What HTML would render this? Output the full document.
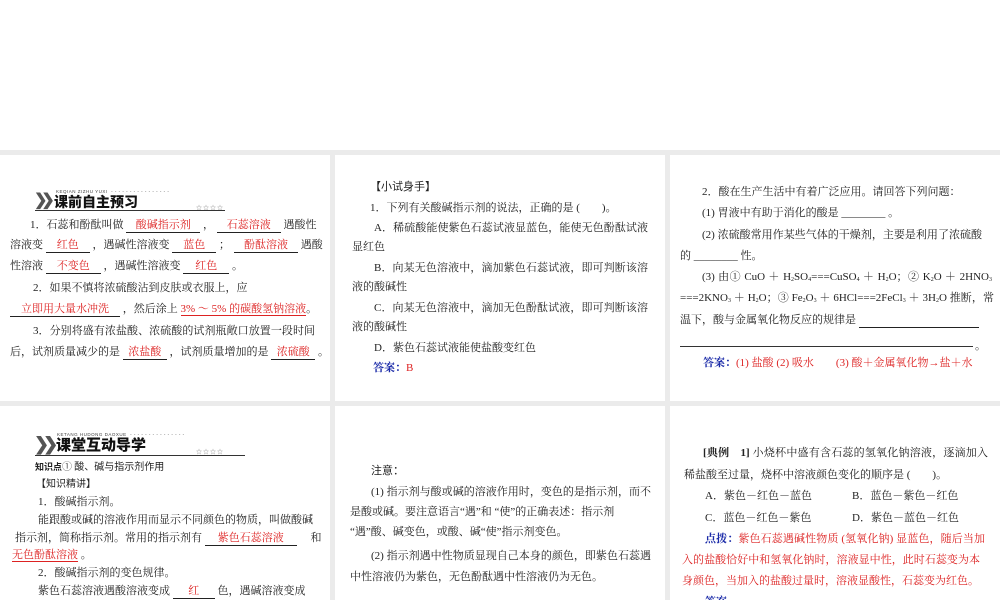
<!DOCTYPE html>
<html><head><meta charset="utf-8">
<style>
*{margin:0;padding:0;box-sizing:border-box}
html,body{width:1000px;height:600px;overflow:hidden}
body{position:relative;background:#ebebeb;font-family:"Liberation Serif","Noto Serif CJK SC",serif;color:#222}
.p{position:absolute;background:#fff}
.l{position:absolute;white-space:nowrap;font-size:11px;line-height:14px}
.j{text-align:justify;text-align-last:justify}
.b{display:inline-block;border-bottom:1px solid #222;text-align:center;color:#d22;line-height:13px;text-align-last:center}
.r{color:#d22}
.u{color:#d22;border-bottom:1px solid #d22}
.bl{color:#1a2aa8;font-weight:bold}
.hd{position:absolute;font-family:"Noto Sans CJK SC",sans-serif;font-weight:900;color:#111;white-space:nowrap}
.py{position:absolute;font-family:"Liberation Sans",sans-serif;font-size:4.5px;color:#444;letter-spacing:.5px;white-space:nowrap}
.st{position:absolute;font-size:6px;color:#888;letter-spacing:1px}
.hl{position:absolute;height:1px;background:#333}
.chev{position:absolute;font-family:"Liberation Sans",sans-serif;font-weight:bold;color:#555;letter-spacing:-6px}
sub{font-size:6px;vertical-align:-1px}
.s{font-family:"Noto Sans CJK SC",sans-serif}
</style></head><body>
<div class="p" style="left:0;top:0;width:1000px;height:150px"></div>
<div class="p" style="left:0;top:155px;width:330px;height:246px"></div>
<div class="p" style="left:335px;top:155px;width:330px;height:246px"></div>
<div class="p" style="left:670px;top:155px;width:330px;height:246px"></div>
<div class="p" style="left:0;top:406px;width:330px;height:200px"></div>
<div class="p" style="left:335px;top:406px;width:330px;height:200px"></div>
<div class="p" style="left:670px;top:406px;width:330px;height:200px"></div>

<!-- panel 1 -->
<div class="py" style="left:56px;top:189px">KEQIAN ZIZHU YUXI &nbsp;- - - - - - - - - - - - - - - -</div>
<div class="chev" style="left:34px;top:192px;font-size:16px;line-height:17px">❯❯</div>
<div class="hd" style="left:54px;top:194px;font-size:14px;line-height:16px">课前自主预习</div>
<div class="st" style="left:196px;top:203px">☆☆☆☆</div>
<div class="hl" style="left:35px;top:210px;width:190px"></div>
<div class="l" style="left:30px;top:218px">1．石蕊和酚酞叫做 <span class="b" style="width:74px">酸碱指示剂</span> ， <span class="b" style="width:64px">石蕊溶液</span> 遇酸性</div>
<div class="l" style="left:10px;top:238px">溶液变 <span class="b" style="width:44px">红色</span> ，遇碱性溶液变 <span class="b" style="width:44px">蓝色</span> ；<span class="b" style="width:64px;margin-left:4px">酚酞溶液</span> 遇酸</div>
<div class="l" style="left:10px;top:259px">性溶液 <span class="b" style="width:55px">不变色</span> ，遇碱性溶液变 <span class="b" style="width:46px">红色</span> 。</div>
<div class="l" style="left:33px;top:281px">2．如果不慎将浓硫酸沾到皮肤或衣服上，应</div>
<div class="l" style="left:10px;top:302px"><span class="b" style="width:110px">立即用大量水冲洗</span> ，然后涂上 <span class="u">3% ～ 5% 的碳酸氢钠溶液</span>。</div>
<div class="l j" style="left:33px;top:324px;width:282px">3．分别将盛有浓盐酸、浓硫酸的试剂瓶敞口放置一段时间</div>
<div class="l" style="left:10px;top:345px">后，试剂质量减少的是 <span class="b" style="width:44px">浓盐酸</span> ，试剂质量增加的是 <span class="b" style="width:44px">浓硫酸</span> 。</div>

<!-- panel 2 -->
<div class="l s" style="left:370px;top:179px">【小试身手】</div>
<div class="l" style="left:370px;top:201px">1．下列有关酸碱指示剂的说法，正确的是 (　　)。</div>
<div class="l j" style="left:374px;top:221px;width:274px">A．稀硫酸能使紫色石蕊试液显蓝色，能使无色酚酞试液</div>
<div class="l" style="left:352px;top:240px">显红色</div>
<div class="l j" style="left:374px;top:261px;width:274px">B．向某无色溶液中，滴加紫色石蕊试液，即可判断该溶</div>
<div class="l" style="left:352px;top:280px">液的酸碱性</div>
<div class="l j" style="left:374px;top:301px;width:274px">C．向某无色溶液中，滴加无色酚酞试液，即可判断该溶</div>
<div class="l" style="left:352px;top:320px">液的酸碱性</div>
<div class="l" style="left:374px;top:341px">D．紫色石蕊试液能使盐酸变红色</div>
<div class="l" style="left:373px;top:361px"><span class="bl">答案：</span><span class="r">B</span></div>

<!-- panel 3 -->
<div class="l" style="left:702px;top:185px">2．酸在生产生活中有着广泛应用。请回答下列问题：</div>
<div class="l" style="left:702px;top:206px">(1) 胃液中有助于消化的酸是 ________ 。</div>
<div class="l j" style="left:702px;top:228px;width:280px">(2) 浓硫酸常用作某些气体的干燥剂，主要是利用了浓硫酸</div>
<div class="l" style="left:680px;top:249px">的 ________ 性。</div>
<div class="l j" style="left:702px;top:270px;width:290px">(3) 由① CuO ＋ H<sub>2</sub>SO<sub>4</sub>===CuSO<sub>4</sub> ＋ H<sub>2</sub>O；② K<sub>2</sub>O ＋ 2HNO<sub>3</sub></div>
<div class="l j" style="left:680px;top:291px;width:314px">===2KNO<sub>3</sub> ＋ H<sub>2</sub>O；③ Fe<sub>2</sub>O<sub>3</sub> ＋ 6HCl===2FeCl<sub>3</sub> ＋ 3H<sub>2</sub>O 推断，常</div>
<div class="l" style="left:680px;top:313px">温下，酸与金属氧化物反应的规律是 <span class="b" style="width:120px">&nbsp;</span></div>
<div class="hl" style="left:680px;top:346px;width:293px"></div>
<div class="l" style="left:975px;top:339px">。</div>
<div class="l" style="left:703px;top:356px"><span class="bl">答案：</span><span class="r">(1) 盐酸 (2) 吸水　　(3) 酸＋金属氧化物→盐＋水</span></div>

<!-- panel 4 -->
<div class="py" style="left:57px;top:432px">KETANG HUDONG DAOXUE &nbsp;- - - - - - - - - - - - - - -</div>
<div class="chev" style="left:34px;top:435px;font-size:18px;line-height:19px">❯❯</div>
<div class="hd" style="left:56px;top:436px;font-size:15px;line-height:18px">课堂互动导学</div>
<div class="st" style="left:196px;top:447px">☆☆☆☆</div>
<div class="hl" style="left:35px;top:455px;width:210px"></div>
<div class="l s" style="left:35px;top:459px;font-size:10px"><b style="font-size:9px">知识点</b><span style="color:#555">①</span> 酸、碱与指示剂作用</div>
<div class="l s" style="left:36px;top:476px;font-size:10px">【知识精讲】</div>
<div class="l" style="left:38px;top:495px">1．酸碱指示剂。</div>
<div class="l j" style="left:38px;top:513px;width:274px">能跟酸或碱的溶液作用而显示不同颜色的物质，叫做酸碱</div>
<div class="l" style="left:15px;top:531px">指示剂，简称指示剂。常用的指示剂有 <span class="b" style="width:92px">紫色石蕊溶液</span> 　和</div>
<div class="l" style="left:12px;top:548px"><span class="u">无色酚酞溶液</span> 。</div>
<div class="l" style="left:38px;top:566px">2．酸碱指示剂的变色规律。</div>
<div class="l" style="left:38px;top:584px">紫色石蕊溶液遇酸溶液变成 <span class="b" style="width:42px">红</span> 色，遇碱溶液变成</div>

<!-- panel 5 -->
<div class="l s" style="left:371px;top:463px">注意：</div>
<div class="l j" style="left:371px;top:485px;width:280px">(1) 指示剂与酸或碱的溶液作用时，变色的是指示剂，而不</div>
<div class="l" style="left:350px;top:505px">是酸或碱。要注意语言“遇”和 “使”的正确表述：指示剂</div>
<div class="l" style="left:350px;top:525px">“遇”酸、碱变色，或酸、碱“使”指示剂变色。</div>
<div class="l j" style="left:371px;top:549px;width:280px">(2) 指示剂遇中性物质显现自己本身的颜色，即紫色石蕊遇</div>
<div class="l" style="left:350px;top:570px">中性溶液仍为紫色，无色酚酞遇中性溶液仍为无色。</div>

<!-- panel 6 -->
<div class="l j" style="left:703px;top:446px;width:285px"><b>[典例　1]</b> 小烧杯中盛有含石蕊的氢氧化钠溶液，逐滴加入</div>
<div class="l" style="left:684px;top:468px">稀盐酸至过量，烧杯中溶液颜色变化的顺序是 (　　)。</div>
<div class="l" style="left:705px;top:489px">A．紫色－红色－蓝色</div>
<div class="l" style="left:852px;top:489px">B．蓝色－紫色－红色</div>
<div class="l" style="left:705px;top:511px">C．蓝色－红色－紫色</div>
<div class="l" style="left:852px;top:511px">D．紫色－蓝色－红色</div>
<div class="l j" style="left:705px;top:532px;width:280px"><span class="bl">点拨：</span><span class="r">紫色石蕊遇碱性物质 (氢氧化钠) 显蓝色，随后当加</span></div>
<div class="l j r" style="left:682px;top:553px;width:298px">入的盐酸恰好中和氢氧化钠时，溶液显中性，此时石蕊变为本</div>
<div class="l r" style="left:682px;top:574px">身颜色，当加入的盐酸过量时，溶液显酸性，石蕊变为红色。</div>
<div class="l bl" style="left:705px;top:595px">答案</div>
</body></html>
